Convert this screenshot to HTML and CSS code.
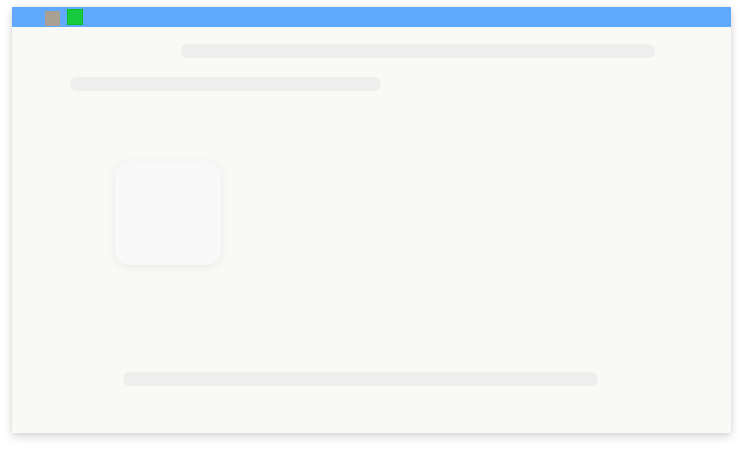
FILE: index.html
```html
<!DOCTYPE html>
<html lang="en">

<head>
  <meta charset="UTF-8">
  <meta name="viewport" content="width=device-width, initial-scale=1.0">
  <title>Window</title>
  <link rel="stylesheet" href="styles.css">
</head>

<body>
  <div class="window">
    <header class="titlebar">
      <span class="dot gray"></span>
      <span class="dot green"></span>
    </header>
    <section class="content">
      <div class="bar bar-top"></div>
      <div class="bar bar-sub"></div>
      <div class="card"></div>
      <div class="bar bar-bottom"></div>
    </section>
  </div>
</body>

</html>
```

FILE: styles.css
```css
body {
  margin: 0;
  padding-bottom: 15px;
  background: #fff;
  font-family: "Liberation Sans", sans-serif;
}

.window {
  width: 719px;
  height: 426px;
  margin: 7px 0 0 12px;
  background: #f9f9f5;
  box-shadow: 0 4px 9px rgba(0, 0, 0, 0.14), 0 0 5px rgba(0, 0, 0, 0.07);
  display: flex;
  flex-direction: column;
}

.titlebar {
  height: 20px;
  background: #61a9ff;
  display: flex;
  align-items: center;
  gap: 7px;
  padding-left: 33px;
}

.dot {
  width: 15px;
  height: 15px;
  box-sizing: border-box;
}

.gray {
  background: #a9a091;
  margin-top: 2px;
}

.green {
  width: 16px;
  height: 16px;
  background: #16cb3d;
  border: 1px solid #0bbd28;
}

.content {
  display: flex;
  flex-direction: column;
}

.bar {
  height: 14px;
  border-radius: 7px;
  background: #eeeeef;
}

.bar-top {
  width: 474px;
  margin: 17px 0 0 169px;
}

.bar-sub {
  width: 311px;
  margin: 19px 0 0 58px;
}

.card {
  width: 106px;
  height: 104px;
  margin: 70px 0 0 103px;
  border-radius: 14px;
  background: #f8f8f9;
  box-shadow: 0 2px 8px rgba(0, 0, 0, 0.07);
}

.bar-bottom {
  width: 475px;
  margin: 107px 0 0 111px;
}
```
